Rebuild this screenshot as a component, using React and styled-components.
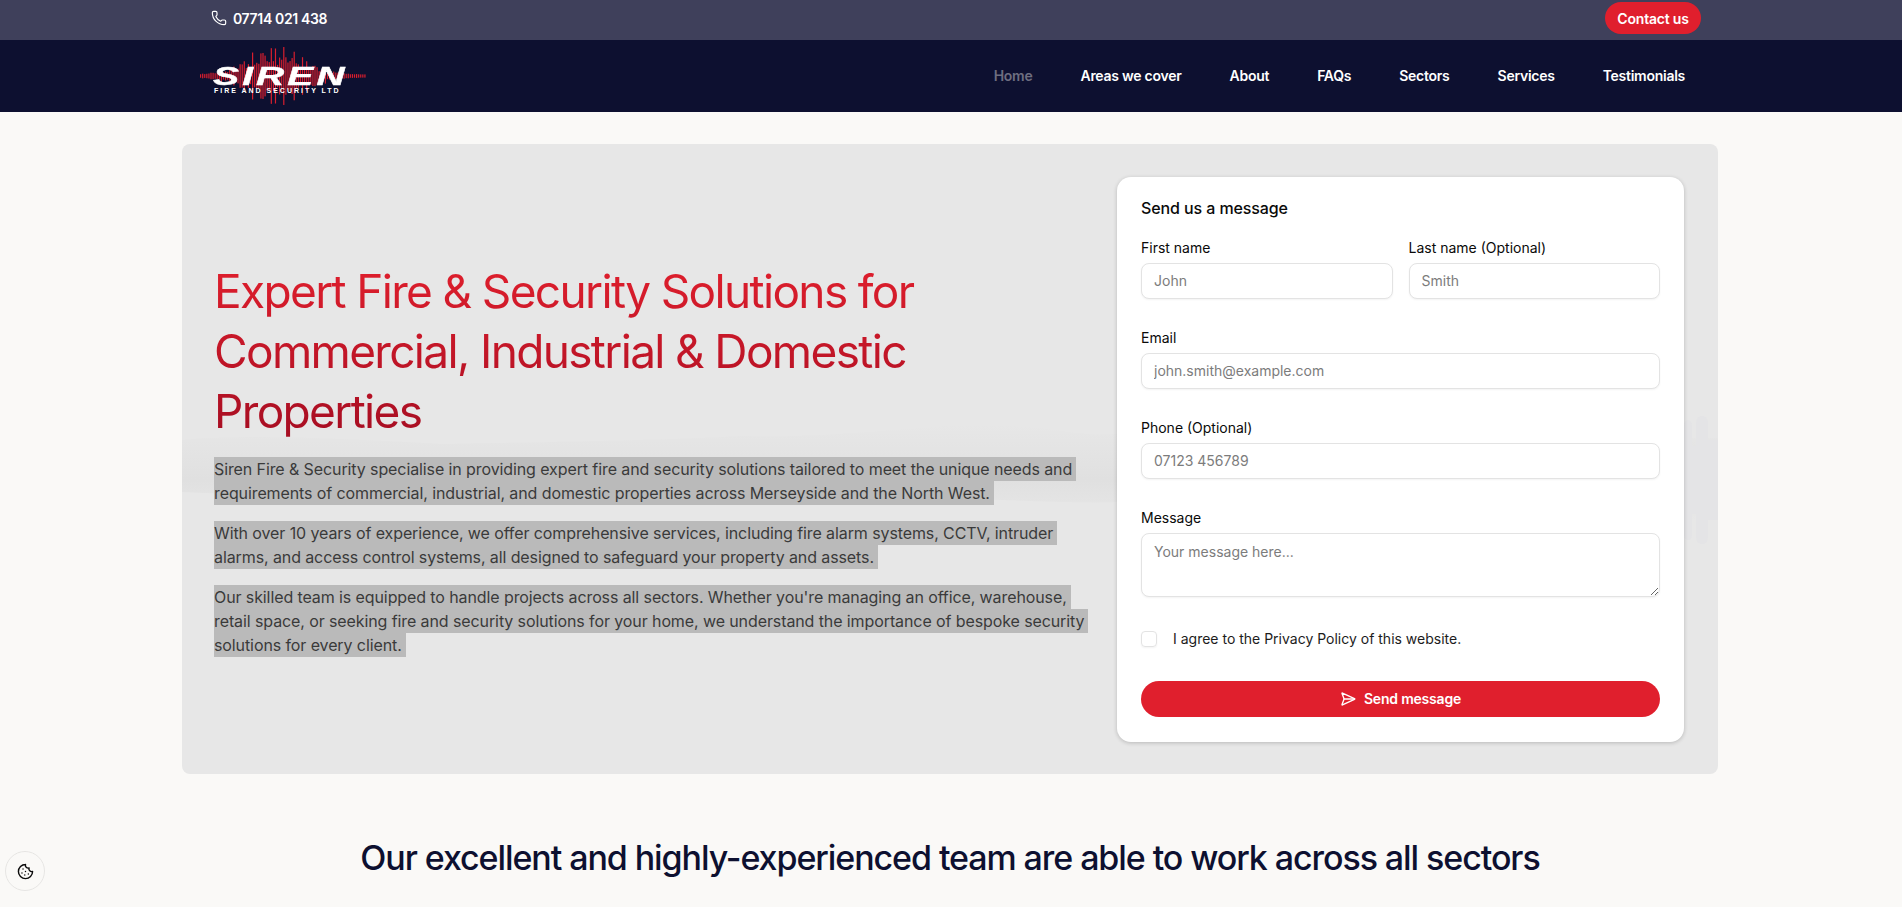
import React from "react";
import styled, { createGlobalStyle } from "styled-components";
import { Phone, SendHorizontal, Cookie } from "lucide-react";

const Global = createGlobalStyle`
  * { box-sizing: border-box; }
  body {
    margin: 0;
    background: #faf9f7;
    font-family: "Inter", "Liberation Sans", sans-serif;
    overflow: hidden;
  }
`;

const Page = styled.div`
  height: 907px;
  overflow: hidden;
`;

const TopBar = styled.div`
  height: 40px;
  background: #3f405b;
  padding: 0 201px 4px 211px;
  display: flex;
  align-items: center;
  justify-content: space-between;
`;

const PhoneLink = styled.a`
  display: flex;
  align-items: center;
  gap: 6px;
  color: #fff;
  font-size: 14px;
  font-weight: 600;
  letter-spacing: -0.35px;
`;

const ContactButton = styled.a`
  width: 96px;
  height: 32px;
  border-radius: 16px;
  background: #e01f2d;
  color: #fff;
  font-size: 14px;
  font-weight: 600;
  letter-spacing: -0.2px;
  display: flex;
  align-items: center;
  justify-content: center;
`;

const NavBar = styled.nav`
  height: 72px;
  background: #0d1030;
  padding: 0 217px 0 199px;
  display: flex;
  align-items: center;
  justify-content: space-between;
`;

const NavList = styled.div`
  display: flex;
  gap: 48px;
  margin-top: -2px;
`;

const NavLink = styled.a`
  color: ${(p) => (p.$active ? "#6d6e80" : "#fff")};
  font-size: 14px;
  font-weight: 600;
  letter-spacing: -0.26px;
`;

const LogoBox = styled.div`
  position: relative;
  width: 168px;
  height: 64px;
`;

const LogoWave = styled.svg`
  display: block;
`;

const LogoName = styled.span`
  position: absolute;
  left: 14px;
  top: 20px;
  color: #fff;
  -webkit-text-stroke: 0.4px #fff;
  font-family: "Liberation Sans", sans-serif;
  font-weight: 700;
  font-style: italic;
  font-size: 25px;
  line-height: 24px;
  letter-spacing: 2px;
  transform: scaleX(1.56);
  transform-origin: left center;
`;

const LogoTag = styled.span`
  position: absolute;
  left: 15px;
  top: 43px;
  color: #fff;
  font-family: "Liberation Sans", sans-serif;
  font-weight: 700;
  font-size: 7px;
  line-height: 8px;
  letter-spacing: 1.98px;
  white-space: nowrap;
`;

const Main = styled.main`
  padding: 32px 184px 0 182px;
`;

const Hero = styled.section`
  position: relative;
  height: 630px;
  background: #e7e7e7;
  border-radius: 8px;
  padding: 32px 34px 32px 32px;
  display: flex;
  justify-content: space-between;
  align-items: center;
  overflow: hidden;
`;

const Scenery = styled.svg`
  position: absolute;
  left: 0;
  top: 246px;
`;

const Intro = styled.div`
  position: relative;
  width: 860px;
`;

const Title = styled.h1`
  margin: 0 0 16px;
  width: 710px;
  font-size: 46px;
  line-height: 60px;
  font-weight: 400;
  letter-spacing: -1.65px;
  background: linear-gradient(180deg, #e01f2d 0%, #a50d22 100%);
  -webkit-background-clip: text;
  background-clip: text;
  color: transparent;
`;

const Para = styled.p`
  margin: 0 0 16px;
  color: #3a3a3a;
  font-size: 16px;
  line-height: 24px;
  letter-spacing: -0.1px;
  &:last-child { margin-bottom: 0; }
`;

const Line = styled.span`
  display: block;
  width: fit-content;
  padding-right: 4px;
  background: #bababa;
  white-space: nowrap;
`;

const Card = styled.form`
  position: relative;
  width: 567px;
  height: 565px;
  flex: none;
  background: #fff;
  border-radius: 14px;
  padding: 20px 24px 24px;
  box-shadow: 0 1px 4px rgba(0, 0, 0, 0.2);
  display: flex;
  flex-direction: column;
`;

const CardTitle = styled.h2`
  margin: 0 0 19px;
  font-size: 16px;
  line-height: 22px;
  font-weight: 500;
  letter-spacing: -0.1px;
  color: #0a0a0a;
`;

const Row = styled.div`
  display: grid;
  grid-template-columns: 1fr 1fr;
  gap: 16px;
`;

const Field = styled.div`
  display: flex;
  flex-direction: column;
  margin-bottom: 29px;
`;

const Label = styled.label`
  font-size: 14px;
  line-height: 20px;
  height: 20px;
  margin-bottom: 5px;
  color: #0a0a0a;
`;

const Input = styled.input`
  height: 36px;
  width: 100%;
  border: 1px solid #e3e3e3;
  border-radius: 8px;
  padding: 0 12px;
  font: inherit;
  font-size: 14px;
  background: #fff;
  box-shadow: 0 1px 2px rgba(0, 0, 0, 0.05);
  &::placeholder { color: #7c7c7c; }
`;

const TextArea = styled.textarea`
  display: block;
  height: 64px;
  width: 100%;
  border: 1px solid #e3e3e3;
  border-radius: 8px;
  padding: 8px 12px;
  font: inherit;
  font-size: 14px;
  line-height: 20px;
  box-shadow: 0 1px 2px rgba(0, 0, 0, 0.05);
  &::placeholder { color: #7c7c7c; }
`;

const AgreeRow = styled.div`
  display: flex;
  align-items: center;
  gap: 16px;
  margin: 5px 0 34px;
  height: 16px;
`;

const Tick = styled.span`
  width: 16px;
  height: 16px;
  border: 1px solid #e3e3e3;
  border-radius: 4px;
  box-shadow: 0 1px 2px rgba(0, 0, 0, 0.05);
`;

const AgreeText = styled.span`
  font-size: 14px;
  color: #1c1c1c;
`;

const SendButton = styled.button`
  height: 36px;
  width: 100%;
  border: 0;
  border-radius: 18px;
  background: #e01f2d;
  color: #fff;
  font: inherit;
  font-size: 14px;
  font-weight: 600;
  letter-spacing: -0.2px;
  display: flex;
  align-items: center;
  justify-content: center;
  gap: 8px;
`;

const SectorsHeading = styled.h2`
  margin: 64px 0 0;
  text-align: center;
  color: #0d1030;
  font-size: 34px;
  line-height: 40px;
  font-weight: 500;
  letter-spacing: -1.08px;
`;

const CookieButton = styled.button`
  position: fixed;
  left: 5px;
  top: 851px;
  width: 40px;
  height: 40px;
  border-radius: 50%;
  border: 1px solid #e6e5e3;
  background: #faf9f7;
  display: flex;
  align-items: center;
  justify-content: center;
  padding: 0;
  color: #0a0a0a;
`;

const navItems = ["Areas we cover", "About", "FAQs", "Sectors", "Services", "Testimonials"];

const paragraphs = [
  [
    "Siren Fire & Security specialise in providing expert fire and security solutions tailored to meet the unique needs and",
    "requirements of commercial, industrial, and domestic properties across Merseyside and the North West.",
  ],
  [
    "With over 10 years of experience, we offer comprehensive services, including fire alarm systems, CCTV, intruder",
    "alarms, and access control systems, all designed to safeguard your property and assets.",
  ],
  [
    "Our skilled team is equipped to handle projects across all sectors. Whether you're managing an office, warehouse,",
    "retail space, or seeking fire and security solutions for your home, we understand the importance of bespoke security",
    "solutions for every client.",
  ],
];

// red sound-wave bars behind the logo name
const waveBars = Array.from({ length: 80 }, (_, i) => {
  const t = (i - 36) / 40;
  const env = Math.exp(-t * t * 4.5);
  const wob = 0.3 + 0.7 * Math.abs(Math.sin(i * 1.7) * Math.cos(i * 0.63));
  return { x: 1 + i * 2.08, h: 3 + env * wob * 62 };
});

const Logo = () => (
  <LogoBox>
    <LogoWave width="168" height="64" viewBox="0 0 168 64">
      {waveBars.map((b) => (
        <rect key={b.x} x={b.x} y={32 - b.h / 2} width="1.2" height={b.h} fill="#d81e2e" />
      ))}
    </LogoWave>
    <LogoName>SIREN</LogoName>
    <LogoTag>FIRE AND SECURITY LTD</LogoTag>
  </LogoBox>
);

const Field2 = ({ label, placeholder }) => (
  <Field>
    <Label>{label}</Label>
    <Input placeholder={placeholder} readOnly />
  </Field>
);

export default function App() {
  return (
    <Page>
      <Global />
      <TopBar>
        <PhoneLink>
          <Phone size={16} strokeWidth={1.75} />
          07714 021 438
        </PhoneLink>
        <ContactButton>Contact us</ContactButton>
      </TopBar>
      <NavBar>
        <Logo />
        <NavList>
          <NavLink $active>Home</NavLink>
          {navItems.map((n) => (
            <NavLink key={n}>{n}</NavLink>
          ))}
        </NavList>
      </NavBar>
      <Main>
        <Hero>
          <Scenery width="1536" height="160" viewBox="0 0 1536 160">
            <defs>
              <linearGradient id="hill" x1="0" y1="0" x2="0" y2="1">
                <stop offset="0" stopColor="#e7e7e7" />
                <stop offset="1" stopColor="#e0e0e0" />
              </linearGradient>
              <linearGradient id="water" x1="0" y1="0" x2="0" y2="1">
                <stop offset="0" stopColor="#e0e0e0" />
                <stop offset="1" stopColor="#e7e7e7" />
              </linearGradient>
            </defs>
            <path
              d="M0 50 C60 44 150 48 260 54 C380 52 480 50 560 46 C620 48 680 42 740 38 C790 32 820 36 850 37 C880 40 900 46 930 44 L1480 48 L1536 48 L1536 90 L0 90 Z"
              fill="url(#hill)"
            />
            <path
              d="M0 90 L1536 90 L1536 130 C1300 128 1100 124 940 112 C880 114 820 108 760 110 C500 118 200 110 0 102 Z"
              fill="url(#water)"
            />
            <path
              d="M1502 50 v-14 q0 -6 4 -6 q4 0 4 6 v20 h4 v-22 q0 -8 6 -8 q6 0 6 8 v16 h10 v40 h-34 Z"
              fill="#e4e4e6"
            />
            <path
              d="M1502 130 v14 q0 6 4 6 q4 0 4 -6 v-20 h4 v22 q0 8 6 8 q6 0 6 -8 v-16 h10 v-40 h-34 Z"
              fill="#e4e4e6"
            />
          </Scenery>
          <Intro>
            <Title>Expert Fire &amp; Security Solutions for Commercial, Industrial &amp; Domestic Properties</Title>
            {paragraphs.map((lines) => (
              <Para key={lines[0]}>
                {lines.map((l) => (
                  <Line key={l}>{l}</Line>
                ))}
              </Para>
            ))}
          </Intro>
          <Card>
            <CardTitle>Send us a message</CardTitle>
            <Row>
              <Field2 label="First name" placeholder="John" />
              <Field2 label="Last name (Optional)" placeholder="Smith" />
            </Row>
            <Field2 label="Email" placeholder="john.smith@example.com" />
            <Field2 label="Phone (Optional)" placeholder="07123 456789" />
            <Field>
              <Label>Message</Label>
              <TextArea placeholder="Your message here..." readOnly />
            </Field>
            <AgreeRow>
              <Tick />
              <AgreeText>I agree to the Privacy Policy of this website.</AgreeText>
            </AgreeRow>
            <SendButton type="button">
              <SendHorizontal size={16} strokeWidth={2} />
              Send message
            </SendButton>
          </Card>
        </Hero>
        <SectorsHeading>Our excellent and highly-experienced team are able to work across all sectors</SectorsHeading>
      </Main>
      <CookieButton aria-label="Cookie settings">
        <Cookie size={17} strokeWidth={2} />
      </CookieButton>
    </Page>
  );
}
